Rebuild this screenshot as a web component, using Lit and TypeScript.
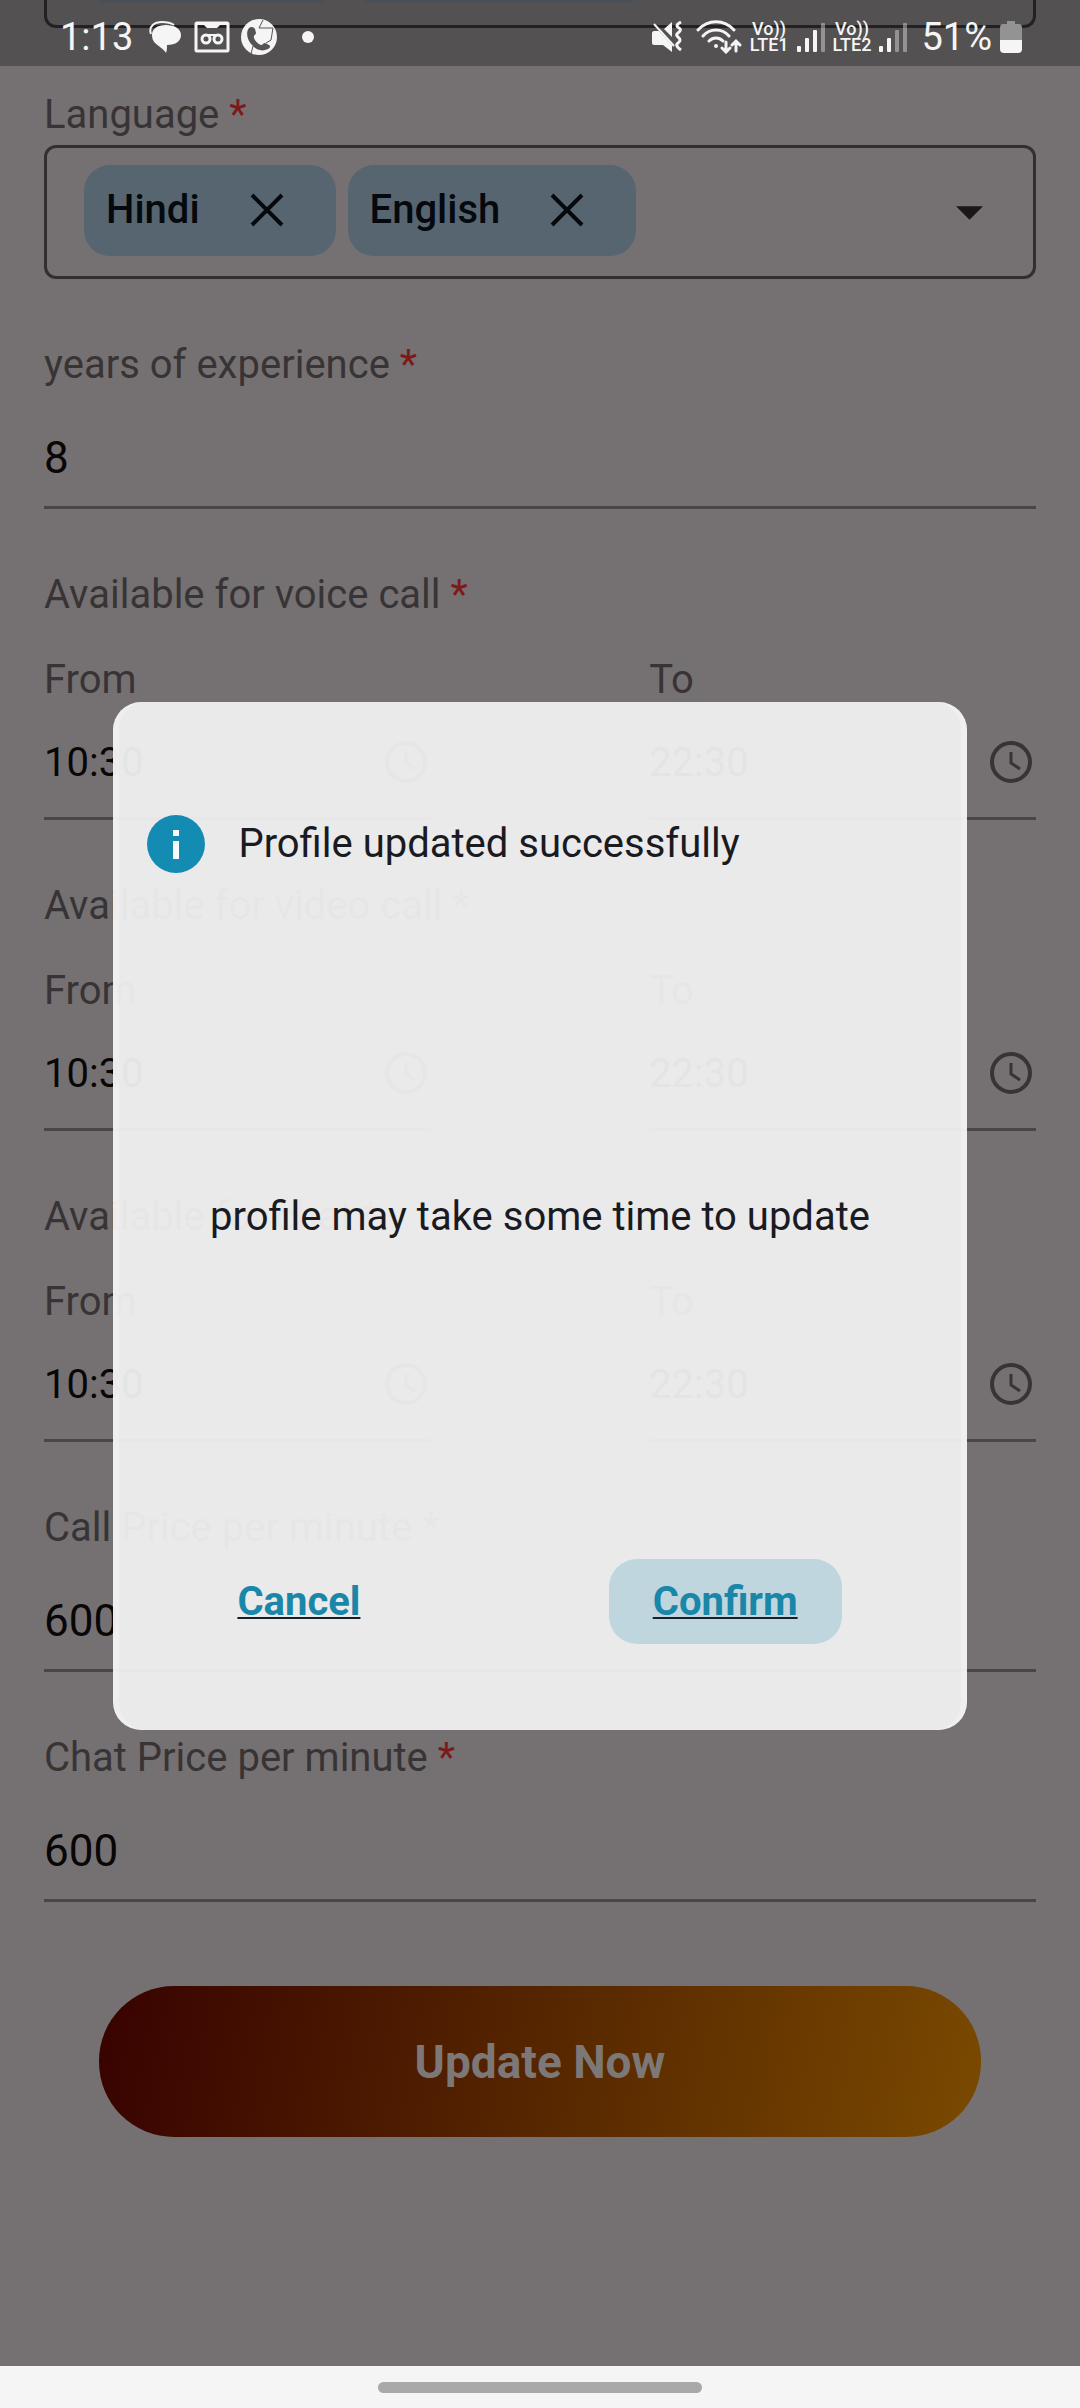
import { LitElement, html, css, svg } from "lit";
import { customElement, property } from "lit/decorators.js";

const clockIcon = html`<svg class="clock" viewBox="0 0 42 42" aria-hidden="true">
  <circle cx="21" cy="21" r="19" fill="none" stroke="currentColor" stroke-width="4" />
  <path d="M21 11v11l9 6" fill="none" stroke="currentColor" stroke-width="3" />
</svg>`;

const crossIcon = html`<svg class="cross" viewBox="0 0 34 34" aria-hidden="true">
  <path d="M2 2l30 30M32 2L2 32" fill="none" stroke="currentColor" stroke-width="4" />
</svg>`;

const signalBars = (level: number) => html`<svg class="bars" viewBox="0 0 28 30" aria-hidden="true">
  ${[6, 14, 22, 29].map(
    (h, i) => svg`<rect x=${i * 8} y=${30 - h} width="4" height=${h} rx="1"
      fill="currentColor" opacity=${i < level ? 1 : 0.4} />`
  )}
</svg>`;

@customElement("status-bar")
export class StatusBar extends LitElement {
  static styles = css`
    :host {
      display: block;
    }
    .bar {
      display: flex;
      align-items: center;
      justify-content: space-between;
      height: 66px;
      box-sizing: border-box;
      padding: 8px 58px 0 60px;
      background: rgba(0, 0, 0, 0.28);
      color: #f5f5f5;
      font-size: 38px;
      line-height: 46px;
    }
    .side {
      display: flex;
      align-items: center;
    }
    svg {
      display: block;
      flex: none;
    }
    .chat { width: 32px; height: 32px; margin-left: 16px; }
    .mail { width: 36px; height: 32px; margin-left: 13px; }
    .phone { width: 37px; height: 37px; margin-left: 11px; }
    .dot { width: 12px; height: 12px; margin-left: 24px; }
    .mute { width: 30px; height: 32px; }
    .wifi { width: 46px; height: 34px; margin-left: 14px; }
    .volte {
      display: grid;
      justify-items: center;
      font-size: 18px;
      font-weight: 500;
      line-height: 16px;
      margin-left: 8px;
    }
    .bars { width: 28px; height: 30px; margin-left: 8px; }
    .percent { margin-left: 14px; }
    .battery { width: 22px; height: 32px; margin-left: 8px; }
  `;

  render() {
    return html`<div class="bar">
      <div class="side">
        <span>1:13</span>
        <svg class="chat" viewBox="0 0 32 32" aria-hidden="true">
          <path d="M2 13C-1 5 6 1 13 1c6 0 9 1 12 3" fill="none" stroke="currentColor" stroke-width="2" />
          <path d="M17 4c9 0 15 4 15 10s-5 10-14 10c0 3 0 5-1 8-3-5-7-6-11-10-2-2-3-5-3-8C3 8 8 4 17 4z" fill="currentColor" />
        </svg>
        <svg class="mail" viewBox="0 0 36 32" aria-hidden="true">
          <rect x="2" y="2" width="32" height="28" rx="1" fill="none" stroke="currentColor" stroke-width="3" />
          <path d="M3 1h30v3h-7l-3 3H13l-3-3H3z" fill="currentColor" />
          <g fill="none" stroke="currentColor" stroke-width="3">
            <circle cx="12" cy="18" r="4" /><circle cx="24" cy="18" r="4" /><path d="M12 14h12" stroke-width="2" />
          </g>
        </svg>
        <svg class="phone" viewBox="0 0 37 37" aria-hidden="true">
          <circle cx="18" cy="18" r="18" fill="currentColor" />
          <path d="M8 9c2-2 5-1 6 1l1 4c0 2-3 2-2 5 1 3 4 6 7 7 2 0 2-2 4-2l4 2c2 1 1 3-1 4-6 3-12 1-16-4C7 22 4 14 8 9z" fill="#545454" />
          <path d="M22 1l-4 8h14l-2 12-5 3M12 27l-2 8" fill="none" stroke="#545454" stroke-width="1" />
        </svg>
        <svg class="dot" viewBox="0 0 12 12" aria-hidden="true"><circle cx="6" cy="6" r="6" fill="currentColor" /></svg>
      </div>
      <div class="side">
        <svg class="mute" viewBox="0 0 30 32" aria-hidden="true">
          <path d="M2 10h5l13 14v7l-9-7H2c-1 0-2-1-2-2V12c0-1 1-2 2-2zM12 8l8-7v15z" fill="currentColor" />
          <path d="M2 3l20 22" stroke="currentColor" stroke-width="2" />
          <path d="M29 1c-6 3-4 5-2 6s2 3-1 5 0 4 1 5 2 3-1 5 0 5 3 7" fill="none" stroke="currentColor" stroke-width="3" />
        </svg>
        <svg class="wifi" viewBox="0 0 46 34" aria-hidden="true">
          <g fill="none" stroke="currentColor" stroke-width="3" stroke-linecap="round">
            <path d="M2 10c10-11 26-11 36 0M7 16c7-8 19-8 26 0M13 21c4-4 10-4 14 0" />
            <path d="M30 22v9m-4-3l4 4 4-4M40 31v-9m-4 3l4-4 4 4" />
          </g>
          <circle cx="20" cy="26" r="2" fill="currentColor" />
        </svg>
        <span class="volte"><span>Vo))</span><span>LTE1</span></span>
        ${signalBars(3)}
        <span class="volte"><span>Vo))</span><span>LTE2</span></span>
        ${signalBars(2)}
        <span class="percent">51%</span>
        <svg class="battery" viewBox="0 0 22 32" aria-hidden="true">
          <path d="M7 0h8v3h4q3 0 3 4v12H0V7q0-4 3-4h4z" fill="#939393" />
          <path d="M0 19h22v9q0 4-4 4H4q-4 0-4-4z" fill="currentColor" />
        </svg>
      </div>
    </div>`;
  }
}

@customElement("chip-select")
export class ChipSelect extends LitElement {
  @property() label = "";
  @property({ attribute: false }) values: string[] = [];

  static styles = css`
    :host {
      display: grid;
      grid-template-columns: minmax(0, 1fr);
      gap: 6px;
    }
    .label {
      color: #383435;
    }
    .required {
      color: #7c1a1a;
    }
    .box {
      display: flex;
      align-items: center;
      gap: 12px;
      height: 134px;
      box-sizing: border-box;
      padding: 0 50px 4px 37px;
      border: 3px solid #332f30;
      border-radius: 12px;
    }
    .chip {
      display: flex;
      align-items: center;
      gap: 50px;
      height: 91px;
      box-sizing: border-box;
      padding: 0 52px 0 22px;
      border-radius: 26px;
      background: #56656f;
      color: #05090e;
      font-weight: 500;
    }
    button {
      padding: 0;
      border: 0;
      background: none;
      color: inherit;
    }
    svg {
      display: block;
    }
    .cross { width: 34px; height: 34px; }
    .open { margin-left: auto; padding-top: 6px; color: #1c1618; }
    .arrow { width: 27px; height: 14px; }
  `;

  render() {
    return html`
      <div class="label" id="label">${this.label} <span class="required">*</span></div>
      <div class="box" role="group" aria-labelledby="label">
        ${this.values.map(
          (v) => html`<span class="chip">${v}<button aria-label="Remove ${v}">${crossIcon}</button></span>`
        )}
        <button class="open" aria-label="Open ${this.label}">
          <svg class="arrow" viewBox="0 0 28 14" aria-hidden="true"><path d="M0 0h28L14 14z" fill="currentColor" /></svg>
        </button>
      </div>
    `;
  }
}

@customElement("text-field")
export class TextField extends LitElement {
  @property() label = "";
  @property() value = "";

  static styles = css`
    :host {
      display: grid;
      grid-template-columns: minmax(0, 1fr);
    }
    .label {
      color: #383435;
    }
    .required {
      color: #7c1a1a;
    }
    .input {
      width: 100%;
      height: 120px;
      box-sizing: border-box;
      padding: 43px 0 22px;
      border: 0;
      border-bottom: 3px solid #4a4647;
      border-radius: 0;
      outline: 0;
      background: none;
      color: #080606;
      font: inherit;
      font-size: 44px;
      line-height: 52px;
    }
  `;

  render() {
    return html`
      <label class="label" for="field">${this.label} <span class="required">*</span></label>
      <input class="input" id="field" inputmode="numeric" .value=${this.value} />
    `;
  }
}

@customElement("time-range")
export class TimeRange extends LitElement {
  @property() label = "";
  @property() from = "";
  @property() to = "";

  static styles = css`
    :host {
      display: grid;
      grid-template-columns: minmax(0, 1fr);
      gap: 37px;
      color: #383435;
    }
    .required {
      color: #7c1a1a;
    }
    .columns {
      display: grid;
      grid-template-columns: 39% 39%;
      justify-content: space-between;
    }
    .column {
      display: grid;
      grid-template-columns: minmax(0, 1fr);
      gap: 22px;
    }
    .time {
      display: flex;
      align-items: center;
      gap: 12px;
      padding: 5px 4px 24px 0;
      border-bottom: 3px solid #4a4647;
    }
    .input {
      flex: 1;
      min-width: 0;
      height: 62px;
      box-sizing: border-box;
      padding: 0;
      border: 0;
      outline: 0;
      background: none;
      color: #080606;
      font: inherit;
    }
    .pick {
      padding: 0;
      border: 0;
      background: none;
      color: #383435;
    }
    .clock {
      display: block;
      width: 42px;
      height: 42px;
    }
  `;

  private column(id: string, name: string, value: string) {
    return html`<div class="column">
      <label for=${id}>${name}</label>
      <div class="time">
        <input class="input" id=${id} .value=${value} />
        <button class="pick" aria-label="Pick time: ${name}">${clockIcon}</button>
      </div>
    </div>`;
  }

  render() {
    return html`
      <div id="label">${this.label} <span class="required">*</span></div>
      <div class="columns" role="group" aria-labelledby="label">
        ${this.column("from", "From", this.from)} ${this.column("to", "To", this.to)}
      </div>
    `;
  }
}

@customElement("notice-dialog")
export class NoticeDialog extends LitElement {
  static styles = css`
    :host {
      display: block;
    }
    .dialog {
      box-sizing: border-box;
      padding: 113px 34px 86px;
      border-radius: 28px;
      background: rgba(240, 240, 240, 0.95);
      box-shadow: inset 6px 0 0 rgba(255, 255, 255, 0.25), inset -6px 0 0 rgba(255, 255, 255, 0.25);
      color: #1a1a22;
    }
    .head {
      display: flex;
      align-items: center;
      gap: 33px;
    }
    .info {
      width: 58px;
      height: 58px;
      flex: none;
    }
    .title {
      margin: 0;
      font: inherit;
    }
    .message {
      margin: 320px 0 318px;
      text-align: center;
    }
    .actions {
      display: flex;
      justify-content: space-between;
      padding: 0 91px 0 46px;
    }
    .action {
      height: 85px;
      padding: 0 44px;
      border: 0;
      border-radius: 28px;
      background: none;
      color: #1a86a8;
      font: inherit;
      font-weight: 700;
      text-decoration: underline #14202e 2px;
      text-underline-offset: 2px;
      text-decoration-skip-ink: none;
    }
    .primary {
      background: #bfd6df;
    }
  `;

  render() {
    return html`<section class="dialog" role="dialog" aria-labelledby="title">
      <div class="head">
        <svg class="info" viewBox="0 0 58 58" aria-hidden="true">
          <circle cx="29" cy="29" r="29" fill="#138bb3" />
          <path d="M26 15h6v6h-6zM26 26h6v18h-6z" fill="#f5fbfd" />
        </svg>
        <h2 class="title" id="title">Profile updated successfully</h2>
      </div>
      <p class="message">profile may take some time to update</p>
      <div class="actions">
        <button class="action">Cancel</button>
        <button class="action primary">Confirm</button>
      </div>
    </section>`;
  }
}

@customElement("app-root")
export class AppRoot extends LitElement {
  static styles = css`
    :host {
      display: flex;
      flex-direction: column;
      position: relative;
      min-height: 100vh;
      background: #757172;
      font-family: Roboto, "Liberation Sans", sans-serif;
      font-size: 40px;
      line-height: 48px;
    }
    .status {
      position: absolute;
      inset: 0 0 auto;
    }
    .page {
      flex: 1;
      display: flex;
      flex-direction: column;
      gap: 62px;
      padding: 0 44px;
    }
    .previous {
      display: flex;
      gap: 40px;
      height: 28px;
      box-sizing: border-box;
      margin-bottom: 1px;
      padding: 0 52px;
      border: 3px solid #332f30;
      border-top: 0;
      border-radius: 0 0 12px 12px;
    }
    .stub {
      width: 226px;
      height: 3px;
      background: #677078;
    }
    .wide {
      width: 268px;
    }
    .submit {
      height: 151px;
      margin: 22px 55px 61px;
      border: 0;
      border-radius: 75px;
      background: linear-gradient(100deg, #380200, #562600 50%, #7a4900);
      color: #7d7878;
      font: inherit;
      font-size: 46px;
      font-weight: 700;
    }
    .overlay {
      position: absolute;
      inset: 66px 0 42px;
      display: flex;
      align-items: center;
      justify-content: center;
    }
    .notice {
      width: 79%;
    }
    .nav {
      display: flex;
      align-items: center;
      justify-content: center;
      height: 42px;
      background: #f5f5f5;
    }
    .handle {
      width: 30%;
      height: 11px;
      border-radius: 6px;
      background: #a9a9a9;
    }
  `;

  render() {
    return html`
      <main class="page">
        <div class="previous"><span class="stub"></span><span class="stub wide"></span></div>
        <chip-select label="Language" .values=${["Hindi", "English"]}></chip-select>
        <text-field label="years of experience" value="8"></text-field>
        <time-range label="Available for voice call" from="10:30" to="22:30"></time-range>
        <time-range label="Available for video call" from="10:30" to="22:30"></time-range>
        <time-range label="Available for chat" from="10:30" to="22:30"></time-range>
        <text-field label="Call Price per minute" value="600"></text-field>
        <text-field label="Chat Price per minute" value="600"></text-field>
        <button class="submit">Update Now</button>
      </main>
      <footer class="nav"><span class="handle"></span></footer>
      <status-bar class="status"></status-bar>
      <div class="overlay"><notice-dialog class="notice"></notice-dialog></div>
    `;
  }
}
